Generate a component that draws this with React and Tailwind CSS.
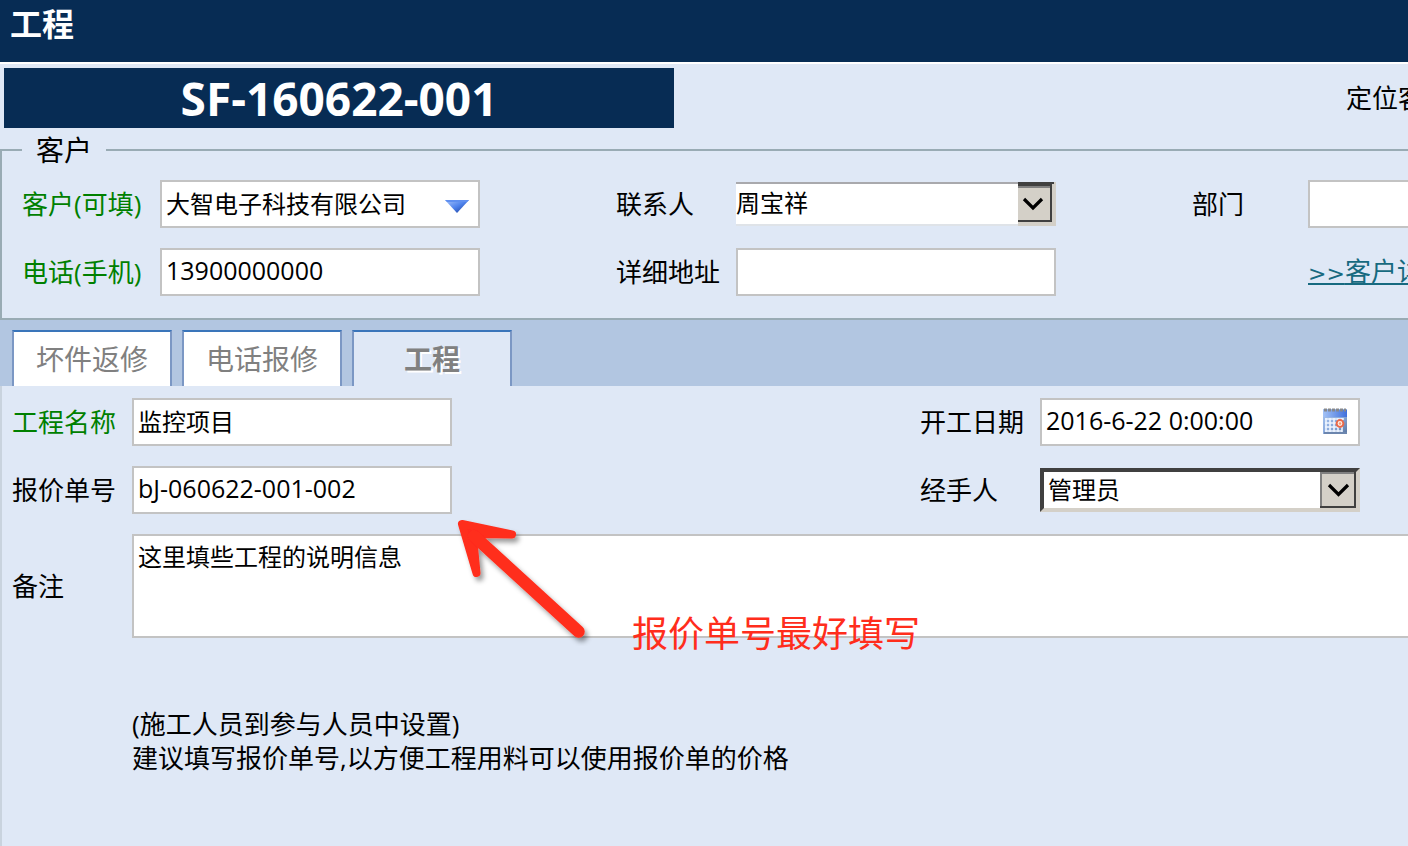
import React, { useState } from 'react';

const FIELD =
  'block h-12 w-80 shrink-0 border-2 border-[#c3c3c3] bg-white px-1 pb-1 leading-8 text-black outline-none';

const TABS = ['坏件返修', '电话报修', '工程'];

const TextField = ({ id, label, labelClass, textClass = 'text-[24px]', value = '', children }) => {
  const [text, setText] = useState(value);

  return (
    <div className="flex items-center">
      <label htmlFor={id} className={`shrink-0 whitespace-nowrap ${labelClass}`}>
        {label}
      </label>
      <div className="relative">
        <input
          id={id}
          type="text"
          className={`${FIELD} ${textClass}`}
          value={text}
          onChange={(e) => setText(e.target.value)}
        />
        {children}
      </div>
    </div>
  );
};

const DropArrow = () => (
  <svg className="absolute top-5 right-2 h-4 w-7" viewBox="0 0 28 16" aria-hidden="true">
    <defs>
      <linearGradient id="dropBlue" x1="0" y1="0" x2="1" y2="1">
        <stop offset="0" stopColor="#a9c6fb" />
        <stop offset="0.5" stopColor="#4e82ec" />
        <stop offset="1" stopColor="#12338c" />
      </linearGradient>
    </defs>
    <path d="M1 0H25L13 13Z" fill="url(#dropBlue)" />
    <path d="M1 0H25L23 2H3Z" fill="#5f8ff0" />
  </svg>
);

const CalendarIcon = () => (
  <svg viewBox="0 0 26 26" className="h-[26px] w-[26px]" aria-hidden="true">
    <defs>
      <linearGradient id="calHead" x1="0" y1="0" x2="1" y2="0">
        <stop offset="0" stopColor="#a4c3f6" />
        <stop offset="1" stopColor="#3f6fdc" />
      </linearGradient>
      <linearGradient id="calBody" x1="0" y1="0" x2="1" y2="1">
        <stop offset="0" stopColor="#a9c6f2" />
        <stop offset="0.6" stopColor="#86a6d8" />
        <stop offset="1" stopColor="#5a759f" />
      </linearGradient>
    </defs>
    <rect x="1" y="1" width="24" height="25" fill="url(#calBody)" />
    <rect x="1" y="2" width="24" height="7" fill="url(#calHead)" />
    <path d="M2 2H24" stroke="#85878c" strokeWidth="3" strokeDasharray="3 1" />
    <path
      d="M3 11H22M3 15H20M3 19H20M3 23H20M4 10V24M8 10V24M12 10V24M16 10V24M20 10V24"
      fill="none"
      stroke="#eef5ff"
      strokeWidth="1.6"
    />
    <path d="M2 24H25V26H2Z" fill="#6c86ae" />
    <circle cx="18" cy="15.5" r="3.4" fill="#ffeee6" stroke="#e9694a" strokeWidth="2" />
    <circle cx="18" cy="15.5" r="1.2" fill="#f29a76" />
  </svg>
);

const ContactButton = () => (
  <svg
    className="pointer-events-none absolute top-0 right-0 h-11 w-[38px]"
    viewBox="0 0 38 44"
    aria-hidden="true"
  >
    <rect width="38" height="44" fill="#d4d0c8" />
    <path d="M0 0H36V2H34V4H0Z" fill="#404040" />
    <path d="M0 4H32V6H0Z" fill="#808080" />
    <path d="M32 4H34V40H0V38H32Z" fill="#404040" />
    <path d="M6 17L15 26L24 17" fill="none" stroke="#000" strokeWidth="3.2" />
  </svg>
);

const HandlerButton = () => (
  <svg
    className="pointer-events-none absolute top-1 right-1 h-9 w-9"
    viewBox="0 0 36 36"
    aria-hidden="true"
  >
    <rect width="36" height="36" fill="#d4d0c8" />
    <path d="M0 0H34V2H2V34H0Z" fill="#808080" />
    <path d="M34 0H36V36H0V34H34Z" fill="#404040" />
    <path d="M9 13L18.5 22.5L28 13" fill="none" stroke="#000" strokeWidth="3.2" />
  </svg>
);

const RedArrow = () => (
  <svg
    className="pointer-events-none absolute top-[130px] left-[448px] h-[130px] w-[150px]"
    viewBox="450 516 150 130"
    aria-hidden="true"
  >
    <defs>
      <filter id="arrowShadow" x="-20%" y="-20%" width="150%" height="150%">
        <feDropShadow dx="3" dy="4" stdDeviation="2.5" floodColor="#000" floodOpacity="0.4" />
      </filter>
    </defs>
    <g
      filter="url(#arrowShadow)"
      fill="#ff2d1c"
      stroke="#ff2d1c"
      strokeLinejoin="round"
      strokeLinecap="round"
    >
      <path d="M462 524L512 534.5L481 534L473.5 542L476.5 573Z" strokeWidth="8" />
      <path d="M474 536L578.5 631.5" strokeWidth="12.5" />
    </g>
  </svg>
);

const App = () => {
  const [activeTab, setActiveTab] = useState('工程');

  return (
    <div className="min-h-screen overflow-x-hidden bg-[#dfe8f6] font-['Open_Sans','Noto_Sans_CJK_SC',sans-serif] text-[26px] leading-[34px] text-black">
      <div className="flex min-h-screen min-w-[1660px] flex-col">
        <header className="h-16 border-b-2 border-white bg-[#072c54] px-[10px] pt-1">
          <h1 className="text-[32px] leading-10 font-bold text-white">工程</h1>
        </header>

        <div className="flex items-center px-1 pt-1">
          <div className="h-[60px] w-[670px] bg-[#072c54] text-center text-[46px] leading-[60px] font-bold text-white">
            SF-160622-001
          </div>
          <span className="ml-[672px]">定位客户</span>
        </div>

        <fieldset className="mt-1 border-2 border-[#99abb4] px-5 pb-[22px]">
          <legend className="px-[14px] text-[28px] leading-9">客户</legend>
          <div className="mt-3 flex flex-col gap-5">
            <div className="flex items-center">
              <TextField
                id="customer"
                label="客户(可填)"
                labelClass="w-[138px] text-[#008000]"
                value="大智电子科技有限公司"
              >
                <button type="button" aria-label="选择客户" className="absolute inset-y-0 right-0 w-10">
                  <DropArrow />
                </button>
              </TextField>
              <div className="ml-[136px] flex items-center">
                <label htmlFor="contact" className="w-[120px]">
                  联系人
                </label>
                <div className="relative w-80">
                  <select
                    id="contact"
                    className="block h-11 w-full appearance-none border-t-2 border-b-2 border-t-[#a9a9ad] border-b-[#dfe3e8] bg-white pb-[2px] text-[24px] leading-8 outline-none"
                  >
                    <option>周宝祥</option>
                  </select>
                  <ContactButton />
                </div>
              </div>
              <div className="ml-[136px]">
                <TextField id="department" label="部门" labelClass="w-[116px]" />
              </div>
            </div>
            <div className="flex items-center">
              <TextField
                id="phone"
                label="电话(手机)"
                labelClass="w-[138px] text-[#008000]"
                textClass="text-[25px]"
                value="13900000000"
              />
              <div className="ml-[136px]">
                <TextField id="address" label="详细地址" labelClass="w-[120px]" />
              </div>
              <a href="#" className="ml-[252px] text-[#176a80] underline underline-offset-2">
                <span className="font-['DejaVu_Sans',sans-serif] text-[22px]">&gt;&gt;</span>
                客户详情
              </a>
            </div>
          </div>
        </fieldset>

        <nav className="flex gap-[10px] bg-[#b2c6e1] px-3 pt-[10px]">
          {TABS.map((tab) => (
            <button
              key={tab}
              type="button"
              onClick={() => setActiveTab(tab)}
              className={`h-14 w-40 border-2 border-b-0 border-x-[#7b97c4] border-t-[#3a75ba] text-[28px] text-[#808080] ${
                activeTab === tab
                  ? 'bg-[#dfe8f6] font-bold [text-shadow:2px_2px_0_#fff]'
                  : 'bg-white'
              }`}
            >
              {tab}
            </button>
          ))}
        </nav>

        <main className="relative flex-1 border-l-2 border-[#c9d3de] pt-3 pl-[10px]">
          <div className="flex flex-col gap-5">
            <div className="flex items-center">
              <TextField
                id="project"
                label="工程名称"
                labelClass="w-[120px] text-[#008000]"
                value="监控项目"
              />
              <div className="ml-[468px]">
                <TextField
                  id="startDate"
                  label="开工日期"
                  labelClass="w-[120px]"
                  textClass="text-[25px]"
                  value="2016-6-22 0:00:00"
                >
                  <button type="button" aria-label="选择日期" className="absolute top-[10px] right-3 flex">
                    <CalendarIcon />
                  </button>
                </TextField>
              </div>
            </div>
            <div className="flex items-center">
              <TextField
                id="quoteNo"
                label="报价单号"
                labelClass="w-[120px]"
                textClass="text-[25px]"
                value="bJ-060622-001-002"
              />
              <div className="ml-[468px] flex items-center">
                <label htmlFor="handler" className="w-[120px]">
                  经手人
                </label>
                <div className="relative w-80">
                  <select
                    id="handler"
                    className="block h-11 w-full appearance-none border-4 border-t-[#404040] border-r-[#d4d0c8] border-b-[#d4d0c8] border-l-[#404040] bg-white px-1 text-[24px] leading-8 outline-none"
                  >
                    <option>管理员</option>
                  </select>
                  <HandlerButton />
                </div>
              </div>
            </div>
            <div className="flex items-center">
              <label htmlFor="remark" className="w-[120px] shrink-0">
                备注
              </label>
              <textarea
                id="remark"
                defaultValue="这里填些工程的说明信息"
                className="block h-[104px] flex-1 resize-none border-2 border-[#c3c3c3] bg-white px-1 py-[5px] text-[24px] leading-8 outline-none"
              />
            </div>
          </div>
          <p className="mt-[69px] ml-[120px]">
            (施工人员到参与人员中设置)
            <br />
            建议填写报价单号,以方便工程用料可以使用报价单的价格
          </p>

          <RedArrow />
          <div className="pointer-events-none absolute top-[226px] left-[630px] text-[36px] leading-[44px] text-[#ff2d1c]">
            报价单号最好填写
          </div>
        </main>
      </div>
    </div>
  );
};

export default App;
